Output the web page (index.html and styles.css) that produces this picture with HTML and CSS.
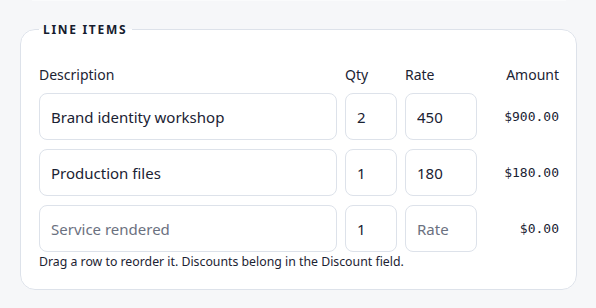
FILE: index.html
```html
<!DOCTYPE html>
<html lang="en">
<head>
<meta charset="utf-8">
<title>Line items</title>
<link rel="stylesheet" href="styles.css">
</head>
<body>
<div class="prev"></div>
<fieldset class="items">
  <legend class="items-legend">Line items</legend>
  <div class="grid">
    <div class="head">Description</div>
    <div class="head">Qty</div>
    <div class="head">Rate</div>
    <div class="head head-amount">Amount</div>

    <input class="field" type="text" value="Brand identity workshop">
    <input class="field" type="text" value="2">
    <input class="field" type="text" value="450">
    <div class="amount">$900.00</div>

    <input class="field" type="text" value="Production files">
    <input class="field" type="text" value="1">
    <input class="field" type="text" value="180">
    <div class="amount">$180.00</div>

    <input class="field" type="text" placeholder="Service rendered">
    <input class="field" type="text" value="1">
    <input class="field" type="text" placeholder="Rate">
    <div class="amount">$0.00</div>
  </div>
  <p class="hint">Drag a row to reorder it. Discounts belong in the Discount field.</p>
</fieldset>
</body>
</html>
```

FILE: styles.css
```css
html, body {
  margin: 0;
  background: #f6f7f9;
}
body {
  padding: 0 19px 0 20px;
  font-family: "Noto Sans", "Open Sans", sans-serif;
  color: #1c2333;
}
.prev {
  height: 1px;
  margin: 0 11px 0 12px;
  background: #fafbfc;
}
.items {
  margin: 21px 0 0 0;
  padding: 29px 17px 19px 18px;
  border: 1px solid #dde2ea;
  border-radius: 15px;
  background: #ffffff;
  min-width: 0;
}
.items-legend {
  margin-left: 0;
  padding: 0 5px 0 4px;
  font-size: 12px;
  font-weight: 700;
  letter-spacing: 1.7px;
  text-transform: uppercase;
  color: #161c2e;
  line-height: 15px;
}
.grid {
  display: grid;
  grid-template-columns: 1fr 52px 72px 74px;
  column-gap: 8px;
  row-gap: 9px;
  align-items: center;
}
.head {
  font-size: 14px;
  line-height: 18px;
  color: #1c2333;
}
.head-amount {
  text-align: right;
}
.field {
  box-sizing: border-box;
  width: 100%;
  height: 47px;
  padding: 0 11px;
  border: 1px solid #dde2ea;
  border-radius: 8px;
  font-family: inherit;
  font-size: 15px;
  color: #1a2233;
  background: #fff;
  outline: none;
}
.field::placeholder {
  color: #6b7180;
}
.amount {
  text-align: right;
  font-family: "DejaVu Sans Mono", monospace;
  font-size: 13px;
  color: #1a2233;
}
.hint {
  margin: 2px 0 0 0;
  font-size: 12.3px;
  line-height: 16px;
  color: #1c2333;
}
```
